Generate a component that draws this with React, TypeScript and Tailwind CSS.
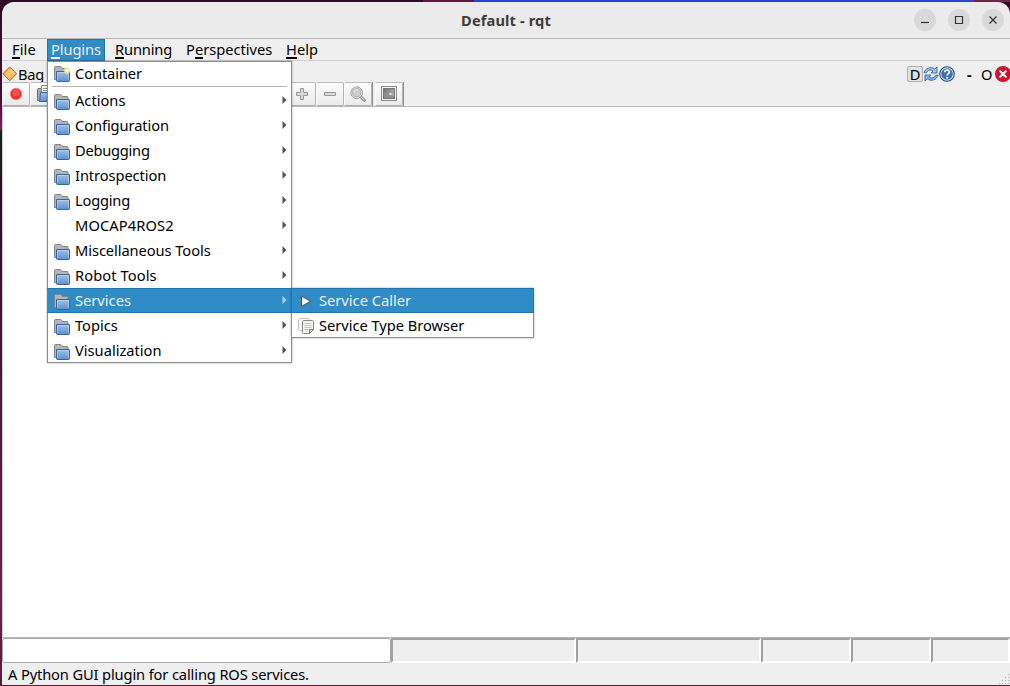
import type { ReactNode } from "react"

type Entry = { label: string; tracking?: string; icon?: boolean }

const groups: Entry[] = [
  { label: "Actions" },
  { label: "Configuration", tracking: "tracking-[-0.08px]" },
  { label: "Debugging", tracking: "tracking-[-0.25px]" },
  { label: "Introspection", tracking: "tracking-[-0.08px]" },
  { label: "Logging", tracking: "tracking-[-0.2px]" },
  { label: "MOCAP4ROS2", tracking: "tracking-[0.1px]", icon: false },
  { label: "Miscellaneous Tools", tracking: "tracking-[-0.07px]" },
  { label: "Robot Tools", tracking: "tracking-[0.1px]" },
  { label: "Services" },
  { label: "Topics" },
  { label: "Visualization" },
]

function Gradients() {
  return (
    <svg width="0" height="0" className="absolute">
      <defs>
        <linearGradient id="blue" x1="0" y1="0" x2="0" y2="1">
          <stop offset="0" stopColor="#a3c2e6" />
          <stop offset="1" stopColor="#5c8fce" />
        </linearGradient>
        <linearGradient id="orange" x1="0" y1="0" x2="1" y2="1">
          <stop offset="0" stopColor="#f57900" />
          <stop offset="0.5" stopColor="#fccb7c" />
          <stop offset="1" stopColor="#f08a1d" />
        </linearGradient>
        <linearGradient id="grey" x1="0" y1="0" x2="1" y2="1">
          <stop offset="0" stopColor="#6e6e6e" />
          <stop offset="1" stopColor="#c4c4c4" />
        </linearGradient>
      </defs>
    </svg>
  )
}

function FolderIcon({ star = false }: { star?: boolean }) {
  return (
    <svg width="16" height="16" viewBox="0 0 16 16" className="shrink-0">
      <path d="M.5 13.5V1.500q0-1 1-1h5q.7 0 1 .7l.7 1.300h4.800q1 0 1 1v10z" fill="#b5b5b2" stroke="#858583" />
      <path d="M2.500 5.500h12.500q.5 0 .5.5v8.500q0 1-1 1h-11q-1 0-1-1z" fill="url(#blue)" stroke="#3465a4" />
      <path d="M3.500 14V6.500h11V14" fill="none" stroke="#c6daf0" strokeOpacity=".55" />
      {star && (
        <g>
          <circle cx="13" cy="4.500" r="3.300" fill="#f5ee86" opacity=".75" />
          <circle cx="13" cy="4.500" r="1.600" fill="#fffde0" />
        </g>
      )}
    </svg>
  )
}

function OpenIcon() {
  return (
    <svg width="18" height="18" viewBox="0 0 18 18" className="shrink-0">
      <path d="M.5 15.500V4.500q0-1 1-1h13v12z" fill="#a9a9a7" stroke="#747472" />
      <path d="M4.500.5h10v11h-10z" fill="#f6f6f5" stroke="#888a85" />
      <path d="M6 3.500h7M6 5.500h7" stroke="#9a9a98" />
      <path d="M3.500 7.500h14v9h-15z" fill="url(#blue)" stroke="#3465a4" />
    </svg>
  )
}

function PlayIcon() {
  return (
    <svg width="16" height="16" viewBox="0 0 16 16" className="shrink-0">
      <path d="M3.5 3v10.500l9-5.250z" fill="#eeeeec" stroke="#555753" strokeLinejoin="round" />
      <path d="M4.600 4.800v6.900l5.900-3.450z" fill="#fff" />
    </svg>
  )
}

function CopyIcon() {
  return (
    <svg width="16" height="16" viewBox="0 0 16 16" className="shrink-0">
      <path d="M1.500.5h9q1 0 1 1v11h-10q-1 0-1-1v-10q0-1 1-1z" fill="#f8f8f7" stroke="#c4c4c2" />
      <path d="M5.500 2.500h9q1 0 1 1v8l-4 4h-6q-1 0-1-1v-11q0-1 1-1z" fill="#f4f4f2" stroke="#888a85" />
      <path d="M6.500 5.500h7M6.500 7.500h7M6.500 9.500h7M6.500 11.500h4" stroke="#c4c5c1" />
      <path d="M15.500 11.500h-4v4z" fill="#fff" stroke="#777975" strokeLinejoin="round" />
    </svg>
  )
}

function DiamondIcon() {
  return (
    <svg width="16" height="16" viewBox="0 0 16 16" className="shrink-0">
      <path d="M7.700.9l6.900 6.900-6.900 6.900L.8 7.800z" fill="url(#orange)" stroke="#c4600a" strokeLinejoin="round" />
      <path d="M3.500 8l4.200-4 4.200 4" fill="none" stroke="#fff2cf" strokeOpacity=".7" />
    </svg>
  )
}

function RefreshIcon() {
  return (
    <svg width="16" height="16" viewBox="0 0 16 16" className="shrink-0">
      <path d="M1 6.800C2 2 8 .2 11.700 3.100L14 1v6H8l1.900-2C7.400 3.300 4.300 4 3.500 6.800z" fill="#a4c5e8" stroke="#3465a4" strokeWidth=".9" />
      <path d="M15 9.200C14 14 8 15.800 4.300 12.900L2 15V9h6l-1.900 2c2.500 1.700 5.600 1 6.400-1.800z" fill="#8ab2de" stroke="#3465a4" strokeWidth=".9" />
    </svg>
  )
}

function HelpIcon() {
  return (
    <svg width="16" height="16" viewBox="0 0 16 16" className="shrink-0">
      <circle cx="8" cy="8" r="7.300" fill="#dce8f5" stroke="#204a87" strokeWidth="1.100" />
      <circle cx="8" cy="8" r="5.800" fill="#3f71b0" />
      <path d="M5.800 6.200c.1-3 4.700-2.800 4.600-.1C10.400 7.700 8.200 7.700 8.200 9.500" fill="none" stroke="#fff" strokeWidth="1.700" />
      <circle cx="8.200" cy="11.700" r="1" fill="#fff" />
    </svg>
  )
}

function CloseIcon() {
  return (
    <svg width="16" height="16" viewBox="0 0 16 16" className="shrink-0">
      <circle cx="8" cy="8" r="8" fill="#cb1431" />
      <path d="M5.200 5.200l5.600 5.600M10.800 5.200l-5.600 5.600" stroke="#fff" strokeWidth="2" strokeLinecap="round" />
    </svg>
  )
}

function PlusIcon() {
  return (
    <svg width="16" height="16" viewBox="0 0 16 16">
      <path d="M6.500 2.500h3v4h4v3h-4v4h-3v-4h-4v-3h4z" fill="#dadada" stroke="#999" />
    </svg>
  )
}

function MinusIcon() {
  return (
    <svg width="16" height="16" viewBox="0 0 16 16">
      <path d="M2.500 6.500h11v3h-11z" fill="#dadada" stroke="#999" />
    </svg>
  )
}

function MagnifierIcon() {
  return (
    <svg width="16" height="16" viewBox="0 0 16 16">
      <path d="M11 11l3.500 3.300" stroke="#999" strokeWidth="3" strokeLinecap="round" />
      <path d="M11 11l3.300 3.100" stroke="#ddd" strokeWidth="1" strokeLinecap="round" />
      <circle cx="6.700" cy="6.700" r="5.800" fill="#e9e9e9" stroke="#9b9b9b" />
      <circle cx="6.700" cy="6.700" r="4.100" fill="#cecece" stroke="#a6a6a6" strokeWidth=".8" />
      <path d="M4 6.500c.3-2 2-3 4-2.500" stroke="#f3f3f3" fill="none" />
    </svg>
  )
}

function PictureIcon() {
  return (
    <svg width="16" height="16" viewBox="0 0 16 16">
      <rect x=".5" y=".5" width="15" height="14" fill="#f3f3f3" stroke="#8c8c8c" />
      <rect x="2.500" y="2.500" width="11" height="10" fill="url(#grey)" stroke="#777" />
      <path d="M3 9q5-1 10 1v2H3z" fill="#8d8d8d" />
      <circle cx="9.500" cy="8" r="1.200" fill="#eee" opacity=".8" />
    </svg>
  )
}

function WindowButton({ children }: { children: ReactNode }) {
  return (
    <button className="flex size-[22px] items-center justify-center rounded-full bg-[#d9d9d9]">
      <svg width="16" height="16" viewBox="0 0 16 16" fill="none" stroke="#333" strokeWidth="1.2">
        {children}
      </svg>
    </button>
  )
}

function ToolButton({ children }: { children: ReactNode }) {
  return (
    <button className="flex h-6 w-7 shrink-0 items-center justify-center rounded-[2px] border border-l-[#fafafa] border-r-[#b4b4b4] border-t-[#bdbdbd] border-b-[#adadad] bg-linear-to-b from-[#fcfcfc] to-[#ebebeb]">
      {children}
    </button>
  )
}

function MenuBarItem({ label, at = 0, className }: { label: string; at?: number; className: string }) {
  return (
    <div className={`flex h-[22px] items-center whitespace-pre border pb-0.5 ${className}`}>
      <span>
        {label.slice(0, at)}
        <span className="inline-block border-b-2 border-current leading-[15px]">{label[at]}</span>
        {label.slice(at + 1)}
      </span>
    </div>
  )
}

function Arrow({ active }: { active: boolean }) {
  return (
    <svg width="5" height="8" viewBox="0 0 5 8" className="mr-1 -mt-0.5">
      <path d="M.5 0l4 4-4 4z" fill={active ? "#a9d0ec" : "#555"} />
    </svg>
  )
}

function MenuRow({ entry }: { entry: Entry }) {
  const active = entry.label === "Services"
  return (
    <div
      className={
        active
          ? "-mx-px flex h-[25px] items-center border-y border-[#2574a9] bg-[#308cc6] px-px text-[#eff0f1]"
          : "flex h-[25px] items-center"
      }
    >
      <div className="ml-1.5 w-[21px] pt-0.5">{entry.icon !== false && <FolderIcon />}</div>
      <span className={`flex-1 pb-0.5 ${entry.tracking ?? ""}`}>{entry.label}</span>
      <Arrow active={active} />
    </div>
  )
}

function PluginsMenu() {
  return (
    <div className="absolute left-[47px] top-[61px] z-10 h-[302px] w-[245px] border border-[#8f8f8f] bg-white shadow-[0_0_2px_rgba(0,0,0,0.35)]">
      <div className="flex h-6 items-center">
        <div className="ml-1.5 w-[21px]">
          <FolderIcon star />
        </div>
        <span className="pb-0.5 tracking-[-0.1px]">Container</span>
      </div>
      <div className="mx-1 mb-px h-px bg-[#b8b8b8]" />
      {groups.map((entry) => (
        <MenuRow key={entry.label} entry={entry} />
      ))}
    </div>
  )
}

function ServicesMenu() {
  return (
    <div className="absolute left-[291px] top-[288px] z-20 h-[50px] w-[243px] border border-[#8f8f8f] bg-white shadow-[0_0_2px_rgba(0,0,0,0.35)]">
      <div className="-mx-px -mt-px flex h-[25px] items-center border border-[#2574a9] bg-[#308cc6] text-[#eff0f1]">
        <div className="ml-1.5 w-[21px]">
          <PlayIcon />
        </div>
        <span className="pb-0.5">Service Caller</span>
      </div>
      <div className="flex h-[25px] items-center">
        <div className="ml-1.5 w-[21px]">
          <CopyIcon />
        </div>
        <span className="pb-0.5 tracking-[-0.03px]">Service Type Browser</span>
      </div>
    </div>
  )
}

function StatusPanel({ className }: { className: string }) {
  return (
    <div
      className={`h-[25px] border-2 border-b-white border-l-[#a0a0a0] border-r-white border-t-[#a0a0a0] ${className}`}
    />
  )
}

export default function App() {
  return (
    <div className="relative flex h-[686px] w-[1010px] flex-col overflow-hidden bg-[linear-gradient(180deg,#2f0a25_0,#4a0d3c_100px,#7b1e68_129px,#1d1d1f_131px,#1d1d1f_176px,#300a26_178px,#68224f_600px,#5b1c38_686px)] pl-0.5 font-['Noto_Sans','Open_Sans',sans-serif] text-[14.67px] leading-5 text-black">
      <Gradients />
      {/* Desktop strip above the window */}
      <div className="-ml-0.5 flex h-0.5 shrink-0">
        <div className="w-[423px] bg-[#300a26]" />
        <div className="w-[51px] bg-[#5b1a3c]" />
        <div className="w-[500px] bg-[#3140d0]" />
        <div className="flex-1 bg-[#712446]" />
      </div>

      <header className="flex h-[37px] shrink-0 items-center rounded-t-xl border-b border-[#b8b8b8] bg-[#ebebeb]">
        <div className="w-[114px]" />
        <h1 className="flex-1 text-center font-bold tracking-[0.12px] text-[#3d3d3d]">
          <span>Default - rqt</span>
        </h1>
        <div className="flex w-[114px] gap-3 pl-[18px]">
          <WindowButton>
            <path d="M4 10.500h8" />
          </WindowButton>
          <WindowButton>
            <path d="M4.500 4.500h7v7h-7z" />
          </WindowButton>
          <WindowButton>
            <path d="M4.500 4.500l7 7M11.500 4.500l-7 7" />
          </WindowButton>
        </div>
      </header>

      <nav className="flex h-[22px] shrink-0 border-b border-[#d2d2d2] bg-[#efefef]">
        <MenuBarItem label="File" className="w-[45px] border-transparent pl-[9px] tracking-[0.1px]" />
        <MenuBarItem
          label="Plugins"
          className="w-[58px] border-[#2574a9] bg-[#308cc6] pl-[3px] tracking-[-0.1px] text-[#eff0f1]"
        />
        <MenuBarItem label="Running" className="w-[71px] border-transparent pl-[9px] tracking-[-0.15px]" />
        <MenuBarItem label="Perspectives" at={1} className="w-[100px] border-transparent pl-[9px]" />
        <MenuBarItem label="Help" className="border-transparent pl-[9px]" />
      </nav>

      {/* Dock title and toolbar */}
      <div className="h-[46px] shrink-0 border-b border-[#b8b8b8] bg-[#efefef]">
        <div className="flex h-[21px] items-end justify-between">
          <div className="flex h-[17px] items-center">
            <DiamondIcon />
            <span className="tracking-[-0.2px]">Bag</span>
          </div>
          <div className="flex h-[17px] items-center">
            <span className="flex h-4 w-4 items-center justify-center rounded-[2px] border border-[#b0b0b0] bg-[#e3e3e3]">
              D
            </span>
            <RefreshIcon />
            <HelpIcon />
            <span className="ml-3 w-[14px] font-bold">-</span>
            <span className="w-[14px]">O</span>
            <div className="-mr-px">
              <CloseIcon />
            </div>
          </div>
        </div>
        <div className="flex">
          <ToolButton>
            <svg width="14" height="14" viewBox="0 0 14 14">
              <circle cx="7" cy="7" r="5.700" fill="#f22c2c" stroke="#ef8585" />
              <circle cx="7" cy="6" r="3.500" fill="#f65353" />
            </svg>
          </ToolButton>
          <ToolButton>
            <div className="pl-1">
              <OpenIcon />
            </div>
          </ToolButton>
          <div className="w-[230px]" />
          <ToolButton>
            <PlusIcon />
          </ToolButton>
          <ToolButton>
            <MinusIcon />
          </ToolButton>
          <ToolButton>
            <MagnifierIcon />
          </ToolButton>
          <div className="mr-0.5 w-px bg-[#8e8e8e]" />
          <ToolButton>
            <PictureIcon />
          </ToolButton>
          <div className="w-px bg-[#8e8e8e]" />
        </div>
      </div>

      <main className="flex-1 border-l border-[#d0d0d0] bg-white" />

      <div className="flex h-[26px] shrink-0 border-t border-[#b8b8b8] bg-[#efefef]">
        <div className="w-[389px] rounded-[3px] border border-[#a9a9a9] bg-white" />
        <StatusPanel className="w-[185px]" />
        <StatusPanel className="w-[185px]" />
        <StatusPanel className="w-[90px]" />
        <StatusPanel className="w-20" />
        <StatusPanel className="flex-1" />
      </div>
      <footer className="mb-px flex h-[22px] shrink-0 items-center justify-between bg-[#efefef] pl-1.5">
        <span className="tracking-[-0.13px]">A Python GUI plugin for calling ROS services.</span>
        <svg width="12" height="12" viewBox="0 0 12 12" className="self-end">
          <path d="M10 1h1v1h-1zM7 4h1v1H7zM10 4h1v1h-1zM4 7h1v1H4zM7 7h1v1H7zM10 7h1v1h-1zM1 10h1v1H1zM4 10h1v1H4zM7 10h1v1H7zM10 10h1v1h-1z" fill="#aaa" />
        </svg>
      </footer>

      <PluginsMenu />
      <ServicesMenu />
    </div>
  )
}
